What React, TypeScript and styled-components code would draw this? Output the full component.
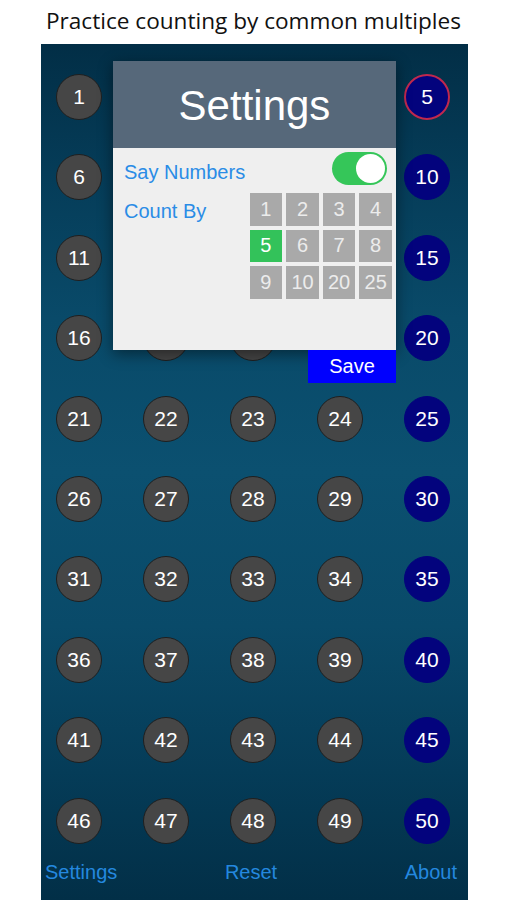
import React from "react";
import styled, { createGlobalStyle } from "styled-components";

const Global = createGlobalStyle`
  html, body { margin: 0; padding: 0; background: #ffffff; }
  body { font-family: "Liberation Sans", Arial, sans-serif; overflow: hidden; }
`;

const Page = styled.div`
  width: 507px;
  height: 900px;
  display: flex;
  flex-direction: column;
`;

const Title = styled.h1`
  margin: 0;
  height: 44px;
  display: flex;
  align-items: center;
  justify-content: center;
  font-family: "Open Sans", "Noto Sans", sans-serif;
  font-weight: 400;
  font-size: 22.6px;
  color: #111;
  padding-bottom: 4px;
  box-sizing: border-box;
`;

const Phone = styled.div`
  position: relative;
  margin-left: 41px;
  width: 427px;
  flex: 1;
  background: linear-gradient(
    to bottom,
    #022e46 0%,
    #053c58 15%,
    #094a69 32%,
    #0b5070 50%,
    #094a69 68%,
    #053c58 85%,
    #022f47 100%
  );
  box-sizing: border-box;
  padding: 30px 18px 0 15px;
  display: flex;
  flex-direction: column;
`;

const Grid = styled.div`
  display: grid;
  grid-template-columns: repeat(5, 46px);
  grid-auto-rows: 46px;
  column-gap: 41px;
  row-gap: 34.4px;
`;

const Ball = styled.div<{ $multiple: boolean; $current: boolean }>`
  width: 46px;
  height: 46px;
  border-radius: 50%;
  box-sizing: border-box;
  display: flex;
  align-items: center;
  justify-content: center;
  font-size: 21px;
  color: #ffffff;
  background: ${(p) => (p.$multiple ? "#03037d" : "#464646")};
  border: ${(p) => (p.$current ? "2px" : "1.5px")} solid
    ${(p) => (p.$current ? "#c0284e" : p.$multiple ? "#03037d" : "#1f1f1f")};
`;

const Footer = styled.div`
  display: grid;
  grid-template-columns: 1fr auto 1fr;
  align-items: center;
  margin-top: 17px;
  margin-left: -11px;
  margin-right: -7px;
`;

const FooterLink = styled.span<{ $align: "start" | "center" | "end" }>`
  color: #2488df;
  font-size: 20px;
  justify-self: ${(p) => p.$align};
`;

const Modal = styled.div`
  position: absolute;
  left: 72px;
  top: 17px;
  width: 283px;
  display: flex;
  flex-direction: column;
  align-items: flex-end;
`;

const Card = styled.div`
  width: 100%;
  display: flex;
  flex-direction: column;
  box-shadow: 0 4px 14px rgba(0, 0, 0, 0.45);
`;

const Header = styled.div`
  height: 87px;
  background: #56687a;
  color: #ffffff;
  font-size: 42px;
  display: flex;
  align-items: center;
  justify-content: center;
  padding-top: 2px;
  box-sizing: border-box;
`;

const Body = styled.div`
  height: 202px;
  background: #efefef;
  box-sizing: border-box;
  padding: 4px 4px 0 11px;
  display: flex;
  flex-direction: column;
`;

const Row = styled.div`
  display: flex;
  justify-content: space-between;
  align-items: flex-start;
`;

const Label = styled.span<{ $top: number }>`
  color: #2a8ce6;
  font-size: 20px;
  margin-top: ${(p) => p.$top}px;
`;

const Switch = styled.div`
  width: 55px;
  height: 33px;
  border-radius: 17px;
  background: #35c659;
  position: relative;
  margin-right: 5px;
  &::after {
    content: "";
    position: absolute;
    right: 2px;
    top: 2px;
    width: 29px;
    height: 29px;
    border-radius: 50%;
    background: #ffffff;
  }
`;

const Buttons = styled.div`
  display: grid;
  grid-template-columns: repeat(4, 32.7px);
  grid-auto-rows: 32.7px;
  gap: 3.9px;
  margin-top: 8px;
`;

const NumButton = styled.div<{ $on: boolean }>`
  background: ${(p) => (p.$on ? "#33c25a" : "#a9a9a9")};
  color: ${(p) => (p.$on ? "#ffffff" : "#ececec")};
  font-size: 20px;
  display: flex;
  align-items: center;
  justify-content: center;
`;

const Save = styled.div`
  width: 88px;
  height: 33px;
  background: #0000fe;
  color: #ffffff;
  font-size: 20px;
  display: flex;
  align-items: center;
  justify-content: center;
`;

const counts = [1, 2, 3, 4, 5, 6, 7, 8, 9, 10, 20, 25];

export default function App() {
  const nums = Array.from({ length: 50 }, (_, i) => i + 1);
  return (
    <Page>
      <Global />
      <Title>Practice counting by common multiples</Title>
      <Phone>
        <Grid>
          {nums.map((n) => (
            <Ball key={n} $multiple={n % 5 === 0} $current={n === 5}>
              {n}
            </Ball>
          ))}
        </Grid>
        <Footer>
          <FooterLink $align="start">Settings</FooterLink>
          <FooterLink $align="center">Reset</FooterLink>
          <FooterLink $align="end">About</FooterLink>
        </Footer>
        <Modal>
          <Card>
            <Header>Settings</Header>
            <Body>
              <Row>
                <Label $top={9}>Say Numbers</Label>
                <Switch />
              </Row>
              <Row>
                <Label $top={15}>Count By</Label>
                <Buttons>
                  {counts.map((c) => (
                    <NumButton key={c} $on={c === 5}>
                      {c}
                    </NumButton>
                  ))}
                </Buttons>
              </Row>
            </Body>
          </Card>
          <Save>Save</Save>
        </Modal>
      </Phone>
    </Page>
  );
}
